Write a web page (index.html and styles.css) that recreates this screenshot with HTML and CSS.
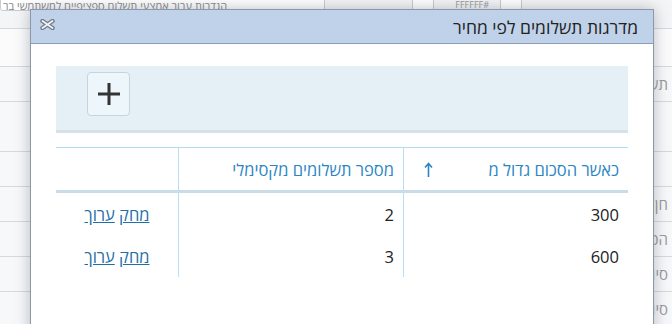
FILE: index.html
```html
<!DOCTYPE html>
<html lang="he" dir="rtl">
<head>
    <meta charset="UTF-8">
    <meta name="viewport" content="width=device-width, initial-scale=1.0">
    <title>מדרגות תשלומים לפי מחיר</title>
    <link rel="stylesheet" href="styles.css">
</head>
<body>
    <!-- Page behind the dialog -->
    <div class="page">
        <div class="page-top">
            <span class="top-small"></span>
            <span class="top-color">#FFFFFF</span>
            <span class="top-small"></span>
            <span class="top-input">הגדרות עבור אמצעי תשלום ספציפיים למשתמשי בר</span>
        </div>
        <div class="page-head"></div>
        <div class="page-row">תשלו</div>
        <div class="page-row tall"></div>
        <div class="page-row"></div>
        <div class="page-row">חן</div>
        <div class="page-row">הסכום</div>
        <div class="page-row">סיום</div>
        <div class="page-row">סיום</div>
    </div>

    <!-- Dialog -->
    <div class="dialog">
        <div class="dialog-title">
            <span class="dialog-caption">מדרגות תשלומים לפי מחיר</span>
            <span class="dialog-close">
                <svg width="15" height="11" viewBox="0 0 15 11">
                    <path d="M2.5 2 L12.5 9 M12.5 2 L2.5 9" stroke="#737b88" stroke-width="4.4" stroke-linecap="round"/>
                    <path d="M2.5 2 L12.5 9 M12.5 2 L2.5 9" stroke="#eef1f5" stroke-width="1.8" stroke-linecap="round"/>
                </svg>
            </span>
        </div>
        <div class="dialog-body">
            <div class="toolbar">
                <button class="add-btn" title="הוסף">
                    <svg width="24" height="24" viewBox="0 0 24 24">
                        <path d="M12 1 V23 M1 12 H23" stroke="#333" stroke-width="3"/>
                    </svg>
                </button>
            </div>

            <table class="grid">
                <thead>
                    <tr>
                        <th class="col-amount">
                            <div class="th-inner">
                                <span>כאשר הסכום גדול מ</span>
                                <svg class="sort" width="9" height="15" viewBox="0 0 9 15">
                                    <path d="M4.5 2 V15 M1 5.5 L4.5 1.5 L8 5.5" stroke="#2d86c4" stroke-width="1.6" fill="none"/>
                                </svg>
                            </div>
                        </th>
                        <th class="col-count">מספר תשלומים מקסימלי</th>
                        <th class="col-actions"></th>
                    </tr>
                </thead>
                <tbody>
                    <tr>
                        <td>300</td>
                        <td>2</td>
                        <td class="actions"><a href="#">מחק</a> <a href="#">ערוך</a></td>
                    </tr>
                    <tr>
                        <td>600</td>
                        <td>3</td>
                        <td class="actions"><a href="#">מחק</a> <a href="#">ערוך</a></td>
                    </tr>
                </tbody>
            </table>
        </div>
    </div>
</body>
</html>
```

FILE: styles.css
```css
/* General */
body {
    margin: 0;
    padding: 0;
    width: 672px;
    height: 324px;
    overflow: hidden;
    position: relative;
    font-family: 'Open Sans', 'Liberation Sans', 'DejaVu Sans', sans-serif;
    background: #f7f8fa;
    color: #222;
}

/* Background page */
.page {
    display: flex;
    flex-direction: column;
}

.page-top {
    height: 29px;
    display: flex;
    align-items: flex-start;
    gap: 7px;
    padding-right: 150px;
    box-sizing: border-box;
    border-bottom: 1px solid #d6d8dc;
    background: #f4f5f6;
}

.top-input,
.top-small {
    height: 16px;
    margin-top: -7px;
    border: 1px solid #c9cdd2;
    border-radius: 3px;
    background: #fff;
}

.top-input {
    flex: 1;
    font-size: 11px;
    line-height: 23px;
    color: #8a8a8a;
    text-align: left;
    white-space: nowrap;
    overflow: hidden;
    padding-left: 2px;
    margin-right: 80px;
}

.top-small {
    width: 20px;
}

.top-color {
    font-size: 9px;
    line-height: 9px;
    color: #999;
    padding: 0 4px;
    width: 44px;
}

.page-head {
    height: 37px;
    border-bottom: 1px solid #d6d8dc;
    background: #fbfbfc;
}

.page-row {
    height: 34px;
    border-bottom: 1px solid #d6d8dc;
    font-size: 15px;
    color: #9a9a9a;
    padding-right: 4px;
    line-height: 34px;
    white-space: nowrap;
    overflow: hidden;
}

.page-row.tall {
    height: 49px;
}

/* Dialog */
.dialog {
    position: absolute;
    top: 9px;
    left: 30px;
    width: 622px;
    height: 330px;
    background: #fff;
    border: 1px solid #8c98a8;
    box-shadow: 0 0 14px rgba(60, 70, 90, 0.35);
}

.dialog-title {
    height: 33px;
    display: flex;
    align-items: center;
    justify-content: space-between;
    padding: 0 15px 0 9px;
    background: #bfd2e9;
    border-bottom: 1px solid #8d9db3;
}

.dialog-caption {
    font-size: 17.5px;
    color: #222;
}

.dialog-close {
    display: flex;
    margin-top: -4px;
}

.dialog-body {
    padding: 22px 25px 0 25px;
}

/* Toolbar */
.toolbar {
    height: 67px;
    display: flex;
    justify-content: flex-end;
    align-items: flex-start;
    padding: 6px 31px 0 31px;
    box-sizing: border-box;
    background: #e4f0f5;
    border-bottom: 3px solid #d6e2e5;
}

.add-btn {
    width: 43px;
    height: 44px;
    padding: 0;
    display: flex;
    align-items: center;
    justify-content: center;
    background: #edf6fb;
    border: 1px solid #c8d3db;
    border-radius: 4px;
    cursor: pointer;
}

/* Grid */
.grid {
    width: 100%;
    margin-top: 14px;
    border-collapse: collapse;
    font-size: 16.5px;
}

.grid th {
    height: 42px;
    padding: 0 9px;
    text-align: right;
    font-weight: normal;
    color: #2d86c4;
    border-top: 1px solid #aedcf2;
    border-bottom: 3px solid #cadce7;
    border-left: 1px solid #b5dff2;
}

.grid th.col-actions {
    border-left: none;
}

.col-amount {
    width: 206px;
}

.col-count {
    width: 206px;
}

.th-inner {
    display: flex;
    justify-content: space-between;
    align-items: center;
    padding-left: 11px;
}

.grid td {
    height: 42px;
    padding: 0 9px;
    text-align: right;
    color: #222;
    border-left: 1px solid #b5dff2;
}

.grid td.actions {
    border-left: none;
    text-align: center;
}

.grid td.actions a {
    color: #1e6fa6;
    text-decoration: underline;
}
```
